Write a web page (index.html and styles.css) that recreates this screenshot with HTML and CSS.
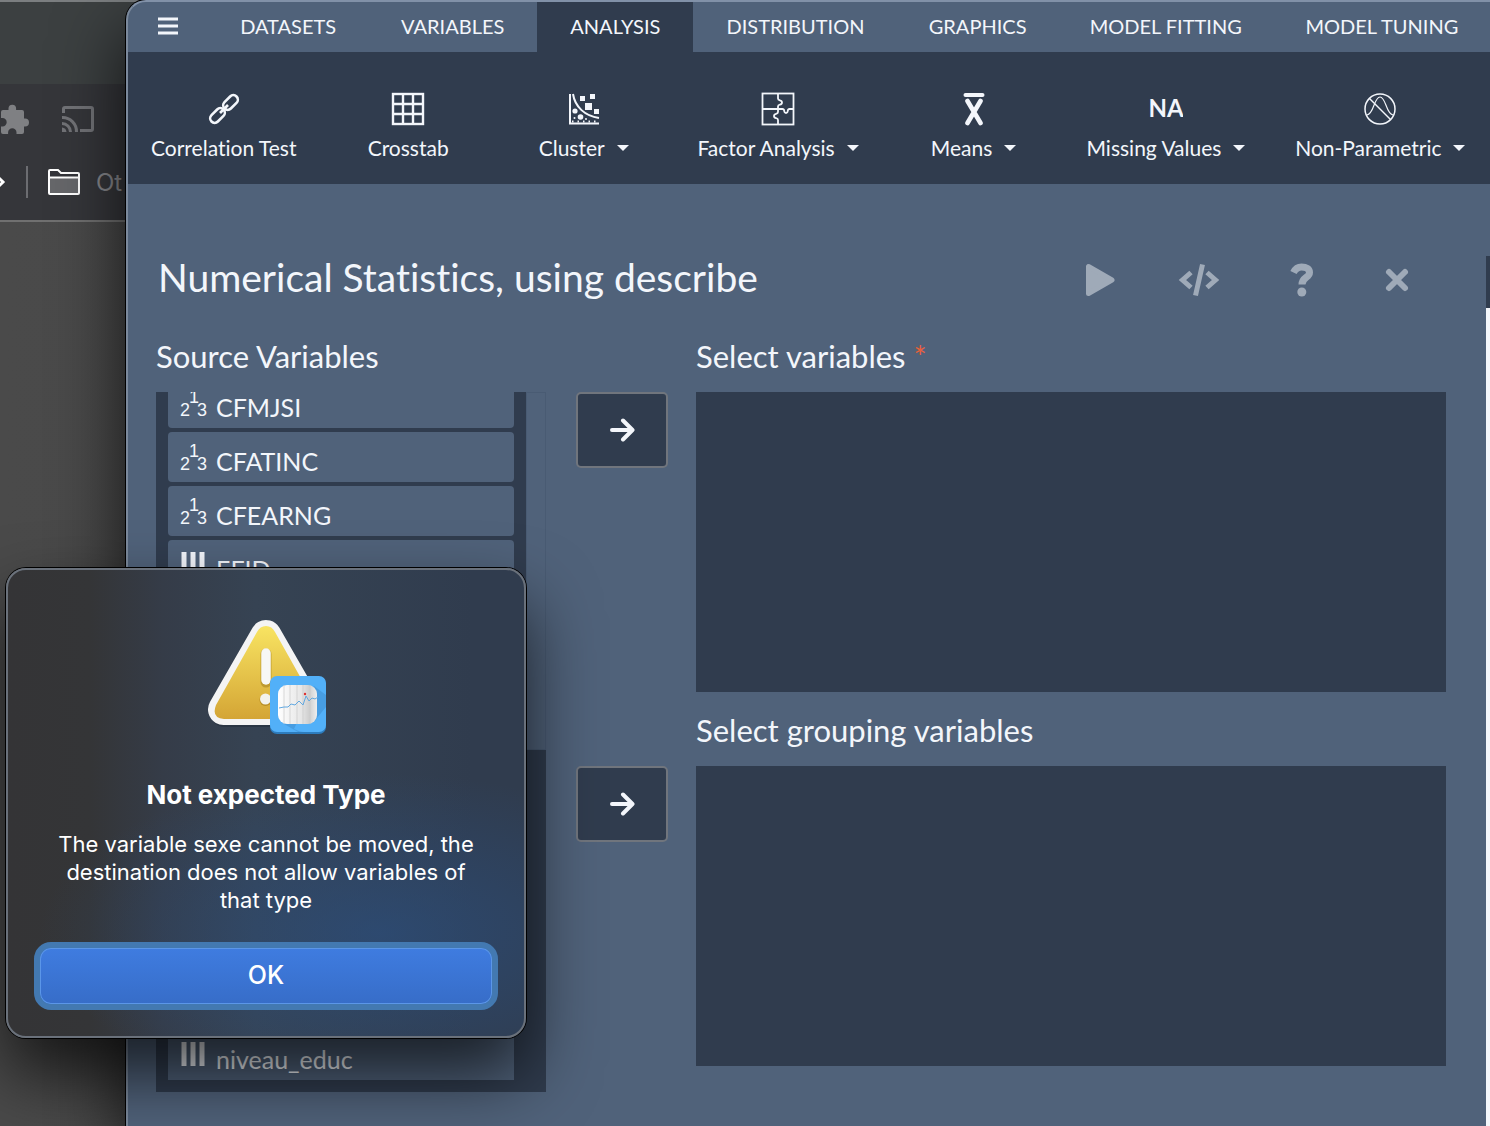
FILE: index.html
```html
<!DOCTYPE html>
<html lang="en">
<head>
<meta charset="utf-8">
<title>Numerical Statistics</title>
<link rel="stylesheet" href="styles.css">
</head>
<body>
<div class="browser">
  <div class="browser-tabs"></div>
  <div class="browser-bars">
    <div class="browser-icons">
      <svg width="29" height="34" viewBox="0 0 29 34"><path fill="#7f8083" d="M3 8h5.500V6.500a3.800 3.800 0 0 1 7.600 0V8H22q2 0 2 2v6.500h1a4 4 0 0 1 0 8h-1V30q0 2-2 2h-5.500v-1.500a4.200 4.200 0 0 0-8.400 0V32H3q-2 0-2-2v-5.500h1.500a4.200 4.200 0 0 0 0-8.400H1V10q0-2 2-2z"/></svg>
      <svg width="34" height="28" viewBox="0 0 34 28" fill="none" stroke="#727377" stroke-width="3"><path d="M2.500 8V4q0-1.500 1.500-1.500h26q1.500 0 1.500 1.500v20q0 1.500-1.500 1.500H19M1 12.500A14 14 0 0 1 15.500 27M1 18.500a8.500 8.500 0 0 1 8.500 8.500"/><path fill="#727377" stroke="none" d="M1 22.500a5 5 0 0 1 4.500 4.500H1z"/></svg>
    </div>
    <div class="bookmarks">
      <svg width="6" height="16" viewBox="0 0 6 16"><path d="M-2 3l5 5-5 5" fill="none" stroke="#fff" stroke-width="3"/></svg>
      <span class="bar-sep"></span>
      <svg width="32" height="26" viewBox="0 0 32 26"><path d="M1 24V2q0-1 1-1h8l3 3h17q1 0 1 1v19q0 1-1 1H2q-1 0-1-1z" fill="#333439" stroke="#fff" stroke-width="2"/><path d="M2 9h28v15H2z" fill="#66676a"/><path d="M1 8.500h30" stroke="#fff" stroke-width="2"/></svg>
      <span class="folder">Ot</span>
    </div>
  </div>
</div>

<div class="app">
  <nav class="tabs">
    <button class="tab" aria-label="Menu"><svg width="20" height="18" viewBox="0 0 20 18"><path d="M0 2h20M0 9h20M0 16h20" stroke="currentColor" stroke-width="3"/></svg></button>
    <button class="tab">DATASETS</button>
    <button class="tab">VARIABLES</button>
    <button class="tab active">ANALYSIS</button>
    <button class="tab">DISTRIBUTION</button>
    <button class="tab">GRAPHICS</button>
    <button class="tab">MODEL FITTING</button>
    <button class="tab">MODEL TUNING</button>
  </nav>

  <div class="toolbar">
    <button class="tool">
      <svg width="34" height="34" viewBox="0 0 34 34" fill="none" stroke="currentColor" stroke-width="2.600"><rect x="-4.500" y="-8.500" width="9" height="17" rx="4.500" transform="translate(23.500 10.500) rotate(45)"/><rect x="-4.500" y="-8.500" width="9" height="17" rx="4.500" transform="translate(10.500 23.500) rotate(45)"/><path d="M13 21l8-8"/></svg>
      <span>Correlation Test</span>
    </button>
    <button class="tool">
      <svg width="34" height="34" viewBox="0 0 34 34" fill="none" stroke="currentColor" stroke-width="2.400"><rect x="2" y="2" width="30" height="30"/><path d="M12 2v30M22 2v30M2 12h30M2 22h30"/></svg>
      <span>Crosstab</span>
    </button>
    <button class="tool">
      <svg width="34" height="34" viewBox="0 0 34 34" fill="currentColor"><path d="M3 2v29.500h29M6 2c2 13 12 22 26 24" fill="none" stroke="currentColor" stroke-width="2"/><path d="M5 29.500h27" stroke="currentColor" stroke-width="2" stroke-dasharray="1.500 4"/><rect x="13" y="4" width="5" height="5"/><rect x="23" y="2" width="5" height="5"/><rect x="18" y="11" width="7" height="7"/><rect x="27" y="17" width="5" height="5"/><circle cx="8" cy="19" r="2.600"/><circle cx="13.500" cy="25" r="2.800"/><circle cx="7.500" cy="26" r="1"/><circle cx="19" cy="27" r="1"/></svg>
      <span class="drop">Cluster</span>
    </button>
    <button class="tool">
      <svg width="34" height="34" viewBox="0 0 34 34" fill="none" stroke="currentColor" stroke-width="1.800"><rect x="1.500" y="1.500" width="31" height="31"/><path d="M17 1.500v5c0 3 4 .5 4 4s-4 1-4 4V17H1.500M17 17h4.500c3 0 .5 4 3.500 4s.5-4 3.500-4h4M17 17v3c0 3-4 .5-4 4s4 1 4 4v4.500"/></svg>
      <span class="drop">Factor Analysis</span>
    </button>
    <button class="tool">
      <svg width="34" height="34" viewBox="0 0 34 34" fill="none" stroke="currentColor" stroke-width="4.600" stroke-linecap="round"><path d="M8.500 3h17" stroke-width="4"/><path d="M10.500 9l13 22M23.500 9l-13 22"/></svg>
      <span class="drop">Means</span>
    </button>
    <button class="tool">
      <svg width="34" height="34" viewBox="0 0 34 34"><text class="na" x="17" y="25" text-anchor="middle">NA</text></svg>
      <span class="drop">Missing Values</span>
    </button>
    <button class="tool">
      <svg width="34" height="34" viewBox="0 0 34 34" fill="none" stroke="currentColor" stroke-width="1.500"><circle cx="17" cy="17" r="15"/><path d="M6.500 6.500l21 21"/><path d="M4 23c7-1 7-18 13-18s6 17 13 18" stroke-width="1.200"/></svg>
      <span class="drop">Non-Parametric</span>
    </button>
  </div>

  <div class="stage">
    <main class="content">
      <header class="heading">
        <h1>Numerical Statistics, using describe</h1>
        <div class="actions">
          <button aria-label="Run"><svg width="30" height="34" viewBox="0 0 30 34"><path d="M3.500 3.500v27L27 17z" fill="currentColor" stroke="currentColor" stroke-width="5" stroke-linejoin="round"/></svg></button>
          <button aria-label="Code"><svg width="42" height="34" viewBox="0 0 42 34" fill="none" stroke="currentColor" stroke-width="5"><path d="M13 9.500L4.500 17l8.500 7.500M29 9.500l8.500 7.500-8.500 7.500M24.500 1.500l-7 31"/></svg></button>
          <button aria-label="Help"><svg width="34" height="34" viewBox="-8 0 34 34"><path d="M4.500 9.500C6.500 5.500 9.500 4 12.500 4c5 0 8 2 8 5.500 0 5.500-7.500 4.500-7.500 12" fill="none" stroke="currentColor" stroke-width="7"/><circle cx="12.800" cy="29" r="4.500" fill="currentColor"/></svg></button>
          <button aria-label="Close"><svg width="26" height="26" viewBox="0 0 26 26"><path d="M5 5l16 16M21 5L5 21" stroke="currentColor" stroke-width="6" stroke-linecap="round"/></svg></button>
        </div>
      </header>

      <div class="panels">
        <section class="source">
          <h2>Source Variables</h2>
          <div class="source-box">
            <ul class="vars">
              <li class="var"><svg class="type" viewBox="0 0 28 30"><text x="0" y="27">2</text><text x="9" y="14">1</text><text x="17" y="27">3</text></svg>CFMJSI</li>
              <li class="var"><svg class="type" viewBox="0 0 28 30"><text x="0" y="27">2</text><text x="9" y="14">1</text><text x="17" y="27">3</text></svg>CFATINC</li>
              <li class="var"><svg class="type" viewBox="0 0 28 30"><text x="0" y="27">2</text><text x="9" y="14">1</text><text x="17" y="27">3</text></svg>CFEARNG</li>
              <li class="var"><svg class="type" viewBox="0 0 28 30"><path d="M4 1v24M13 1v24M22 1v24"/></svg>EFID</li>
              <li class="var last"><svg class="type" viewBox="0 0 28 30"><path d="M4 1v24M13 1v24M22 1v24"/></svg>niveau_educ</li>
            </ul>
            <div class="track"><div class="thumb"></div></div>
          </div>
        </section>

        <div class="targets">
          <section class="target">
            <h2>Select variables <span class="required">*</span></h2>
            <button class="move" aria-label="Move to variables"><svg class="arrow" viewBox="0 0 26 26"><path d="M3 13h20M14 3.500l9.500 9.500-9.500 9.500"/></svg></button>
            <div class="box"></div>
          </section>
          <section class="target">
            <h2>Select grouping variables</h2>
            <button class="move" aria-label="Move to grouping variables"><svg class="arrow" viewBox="0 0 26 26"><path d="M3 13h20M14 3.500l9.500 9.500-9.500 9.500"/></svg></button>
            <div class="box"></div>
          </section>
        </div>
      </div>
    </main>
    <div class="edge"></div>
  </div>
</div>

<div class="dialog" role="alertdialog" aria-labelledby="alert-title" aria-describedby="alert-text">
  <svg class="warning" width="128" height="128" viewBox="0 0 128 128" aria-hidden="true">
    <defs>
      <linearGradient id="gold" x1="0" y1="0" x2="0" y2="1"><stop offset="0" stop-color="#f8e462"/><stop offset="1" stop-color="#d4a535"/></linearGradient>
      <linearGradient id="paper" x1="0" y1="0" x2="1" y2="0"><stop offset="0" stop-color="#fff"/><stop offset=".6" stop-color="#e6e6e6"/><stop offset=".8" stop-color="#cfcfcf"/><stop offset="1" stop-color="#eee"/></linearGradient>
    </defs>
    <path d="M64 27L23 102h82z" fill="#222c39" stroke="#222c39" stroke-width="30" stroke-linejoin="round" opacity=".5"/>
    <path d="M64 25.500L21.500 99.500h85z" fill="#f4f4f4" stroke="#f4f4f4" stroke-width="31" stroke-linejoin="round"/>
    <path d="M64 16q6 0 9 6l41 73q5 13-8 14H22q-13-1-8-14l41-73q3-6 9-6z" fill="url(#gold)"/>
    <path d="M64 44v28" stroke="#a98522" stroke-width="11" stroke-linecap="round" opacity=".6"/>
    <path d="M64 43v27" stroke="#f7f7f5" stroke-width="9.500" stroke-linecap="round"/>
    <circle cx="63.500" cy="90" r="6" fill="#b98f25"/><circle cx="63.500" cy="89" r="5.500" fill="#f3f2ec"/>
    <rect x="68" y="67" width="56" height="57" rx="7" fill="#2d7cbd"/>
    <rect x="68" y="66" width="56" height="56" rx="7" fill="#52b0f8"/>
    <path d="M112 76l12 9v12q-10 12-12 15l-14 2-16 0 14 8H102q-4 0-10-3z" fill="#4396d8" opacity=".7"/>
    <rect x="76" y="75" width="39" height="39" rx="9" fill="url(#paper)"/>
    <path d="M82 75v39M88 75v39M95 75v39M101 75v39M108 75v39" stroke="#c8c8c8" stroke-width=".7"/>
    <path d="M77 98l5-1 4 0 3-3 4 1 4-4 4 4 3-9 3 5 3-3 3 1 3-2" fill="none" stroke="#62a8e0"/>
    <circle cx="103" cy="84" r="1.200" fill="#e03030"/>
  </svg>
  <h3 id="alert-title">Not expected Type</h3>
  <p id="alert-text">The variable sexe cannot be moved, the destination does not allow variables of that type</p>
  <button class="ok">OK</button>
</div>
</body>
</html>
```
FILE: styles.css
```css
* { box-sizing: border-box; }

body {
  margin: 0;
  min-height: 100vh;
  position: relative;
  overflow: hidden;
  background: #444;
  color: #f3f6fb;
  font-family: Lato, "Liberation Sans", sans-serif;
  font-size: 21px;
  font-variant-ligatures: none;
}

h1, h2, h3, p, ul { margin: 0; padding: 0; font-weight: 400; }

button {
  margin: 0;
  padding: 0;
  border: 0;
  background: none;
  color: inherit;
  font: inherit;
}

svg { display: block; flex: none; }

/* browser window at the back */
.browser {
  position: absolute;
  inset: 0;
  border-top: 2px solid #7b7e80;
  background: linear-gradient(90deg, #4a4a4a, #444);
  font-family: Inter, "Liberation Sans", sans-serif;
}
.browser-tabs { height: 82px; background: #3c4041; }
.browser-bars {
  height: 138px;
  padding-top: 18px;
  border-bottom: 2px solid #707070;
  background: #35363a;
}
.browser-icons { display: flex; align-items: center; gap: 32px; height: 34px; }
.bookmarks {
  display: flex;
  align-items: center;
  gap: 20px;
  height: 32px;
  margin-top: 30px;
  color: #85868b;
  font-size: 24px;
}
.folder { margin-left: -4px; }
.bar-sep { width: 2px; height: 32px; background: #6c6d71; }

/* application window */
.app {
  position: relative;
  display: flex;
  flex-direction: column;
  min-height: 100vh;
  margin-left: 126px;
  border-top: 2px solid #8191a8;
  border-left: 2px solid #7b899c;
  border-top-left-radius: 20px;
  background: #50627a;
  box-shadow: 0 0 0 1px #000, 0 30px 70px rgba(0, 0, 0, .75);
}

.tabs {
  display: grid;
  grid-template-columns: 80fr 160fr 169fr 156fr 204fr 160fr 216fr 216fr;
  height: 50px;
  font-size: 20px;
}
.tab {
  display: flex;
  align-items: center;
  justify-content: center;
  padding-bottom: 2px;
  white-space: nowrap;
}
.tab.active { background: #303c4e; }

.toolbar {
  display: grid;
  grid-template-columns: 192fr 178fr 174fr 216fr 176fr 210fr 220fr;
  height: 132px;
  padding-top: 40px;
  background: #303c4e;
}
.tool {
  display: flex;
  flex-direction: column;
  align-items: center;
  gap: 8px;
  line-height: 28px;
  white-space: nowrap;
}
.drop { display: flex; align-items: center; gap: 12px; }
.drop::after {
  content: "";
  border: 6px solid transparent;
  border-top-color: currentColor;
  border-bottom: 0;
}
.na { font-size: 24px; font-weight: 700; fill: currentColor; }

.stage { display: flex; flex: 1; }
.content { flex: 1; min-width: 0; padding: 64px 40px 34px 28px; }
.edge {
  width: 4px;
  margin-top: 72px;
  border-top: 52px solid #303c4e;
  background: #f4f6fa;
}

.heading { display: flex; align-items: center; justify-content: space-between; height: 64px; }
h1 { padding: 0 0 6px 2px; font-size: 39px; line-height: 58px; white-space: nowrap; }
.actions { display: grid; grid-template-columns: repeat(4, 99px); color: #9faab8; }
.actions button { display: flex; align-items: center; justify-content: center; }

.panels { display: flex; gap: 30px; margin-top: 24px; }
h2 { font-size: 31px; line-height: 40px; margin-bottom: 16px; white-space: nowrap; }
.required { color: #e8603c; }

.source { width: 390px; flex: none; }
.source-box { display: flex; height: 700px; overflow: hidden; background: #303c4e; }
.vars {
  display: flex;
  flex: 1;
  flex-direction: column;
  gap: 4px;
  margin-top: -14px;
  padding: 0 12px 12px;
  list-style: none;
}
.var {
  display: flex;
  align-items: center;
  gap: 8px;
  height: 50px;
  padding: 7px 12px 0;
  border-radius: 4px;
  background: #50627a;
  font-size: 25px;
}
.var.last { margin-top: auto; border-radius: 0; }
.type {
  width: 28px;
  height: 30px;
  margin-bottom: 6px;
  fill: currentColor;
  stroke-width: 5;
  font-family: "Liberation Sans", sans-serif;
  font-size: 18px;
}
.type path { stroke: currentColor; }
.track { width: 20px; }
.thumb { height: 358px; background: #50627a; border: 1px solid #495b73; }

.targets { display: flex; flex: 1; flex-direction: column; gap: 18px; min-width: 0; }
.target { display: grid; grid-template-columns: 92px 1fr; column-gap: 28px; }
.target h2 { grid-column: 2; }
.move {
  display: flex;
  align-items: center;
  justify-content: center;
  height: 76px;
  border: 2px solid #70757d;
  border-radius: 5px;
  background: #303c4e;
}
.arrow {
  width: 26px;
  height: 26px;
  fill: none;
  stroke: currentColor;
  stroke-width: 4;
  stroke-linecap: round;
  stroke-linejoin: round;
}
.box { height: 300px; background: #303c4e; }

/* system alert */
.dialog {
  position: absolute;
  top: 568px;
  left: 6px;
  display: flex;
  flex-direction: column;
  align-items: center;
  width: 520px;
  padding: 40px 26px 26px;
  border: 2px solid #6a717b;
  border-radius: 20px;
  background:
    radial-gradient(ellipse 340px 160px at 72% 78%, rgba(43, 78, 125, .7), transparent),
    linear-gradient(90deg, #343436 0, #343537 16%, #353c48 30%, #364353 48%, #303c4e 90%);
  box-shadow: 0 0 0 1px #000, 0 36px 70px rgba(0, 0, 0, .7);
  color: #fff;
  font-family: Inter, "Liberation Sans", sans-serif;
}
.dialog h3 { margin-top: 39px; font-size: 26px; font-weight: 700; line-height: 36px; }
.dialog p { margin-top: 17px; padding: 0 20px; font-size: 22px; line-height: 28px; text-align: center; }
.ok {
  align-self: stretch;
  height: 68px;
  margin-top: 28px;
  padding-bottom: 2px;
  border: 6px solid #4379b1;
  border-radius: 17px;
  background: linear-gradient(#3f7ce0, #376dc8);
  box-shadow: inset 0 0 0 1px #5b96e8;
  font-size: 25px;
  font-weight: 500;
}
```
